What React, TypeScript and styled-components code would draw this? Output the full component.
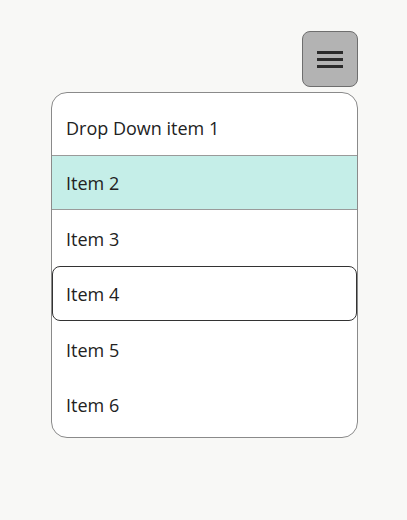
import styled, { createGlobalStyle } from "styled-components";

const Global = createGlobalStyle`
  html, body {
    margin: 0;
    padding: 0;
    background: #f8f8f6;
    font-family: "Open Sans", "Noto Sans", sans-serif;
  }
`;

const items = ["Drop Down item 1", "Item 2", "Item 3", "Item 4", "Item 5", "Item 6"];

const App = () => {
  return (
    <Page>
      <Global />
      <Wrap>
        <MenuButton aria-label="menu">
          <Bar />
          <Bar />
          <Bar />
        </MenuButton>
        <Menu>
          {items.map((label, i) => (
            <Item key={label} state={i === 1 ? "active" : i === 3 ? "focus" : "none"}>
              {label}
            </Item>
          ))}
        </Menu>
      </Wrap>
    </Page>
  );
};

export default App;

const Page = styled.div`
  width: 407px;
  height: 520px;
  padding: 31px 0 0 51px;
  box-sizing: border-box;
`;

const Wrap = styled.div`
  width: 307px;
  display: flex;
  flex-direction: column;
  align-items: flex-end;
  gap: 5px;
`;

const MenuButton = styled.button`
  width: 56px;
  height: 56px;
  box-sizing: border-box;
  border: 1px solid #6e6e6e;
  border-radius: 8px;
  background: #b3b3b3;
  display: flex;
  flex-direction: column;
  justify-content: center;
  align-items: center;
  gap: 4px;
  padding: 0;
`;

const Bar = styled.span`
  display: block;
  width: 26px;
  height: 3px;
  background: #2b2b2b;
`;

const Menu = styled.div`
  width: 307px;
  box-sizing: border-box;
  border: 1px solid #8a8a8a;
  border-radius: 16px;
  background: #fff;
  padding: 6px 0 5px;
  display: flex;
  flex-direction: column;
`;

const Item = styled.div<{ state: "active" | "focus" | "none" }>`
  height: 55.5px;
  box-sizing: border-box;
  display: flex;
  align-items: center;
  padding: 2px 0 0 14px;
  font-size: 18px;
  color: #222;
  border: 1px solid transparent;
  border-left-width: 0;
  border-right-width: 0;
  ${({ state }) =>
    state === "active" &&
    `
    background: #c5eee8;
    border-color: #9a9a9a;
  `}
  ${({ state }) =>
    state === "focus" &&
    `
    border: 1.5px solid #333;
    border-radius: 8px;
    padding-left: 13px;
  `}
`;
